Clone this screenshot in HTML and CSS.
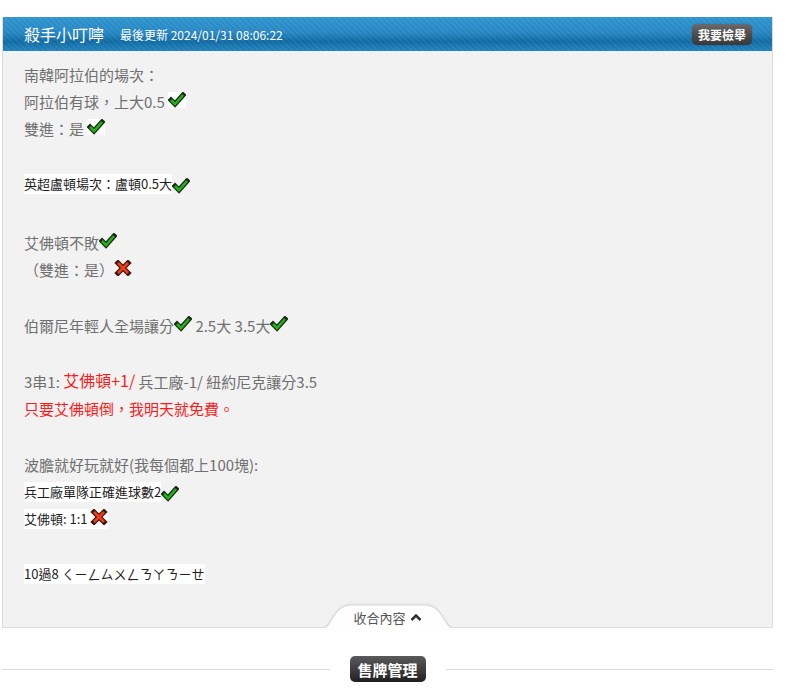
FILE: index.html
```html
<!DOCTYPE html>
<html lang="zh-Hant">
  <head>
    <meta charset="UTF-8" />
    <title>殺手小叮嚀</title>
    <link rel="stylesheet" href="styles.css">
  </head>
  <body>
    <div class="page">
      <div class="tip-box">
        <div class="tip-head">
          <h2>殺手小叮嚀</h2>
          <span class="updated">最後更新 2024/01/31 08:06:22</span>
          <button class="report-btn">我要檢舉</button>
        </div>

        <div class="tip-body">
          <div class="row">南韓阿拉伯的場次：</div>
          <div class="row">阿拉伯有球，上大0.5 <span class="mark"><svg viewBox="0 0 18 16"><rect width="18" height="16" fill="#fff"/><polyline points="3,8 7,12 15,3" class="ok-o"/><polyline points="3,8 7,12 15,3" class="ok"/></svg></span></div>
          <div class="row">雙進：是 <span class="mark"><svg viewBox="0 0 18 16"><rect width="18" height="16" fill="#fff"/><polyline points="3,8 7,12 15,3" class="ok-o"/><polyline points="3,8 7,12 15,3" class="ok"/></svg></span></div>

          <div class="row small gap1"><span class="hl">英超盧頓場次：盧頓0.5大</span><span class="mark low"><svg viewBox="0 0 18 16"><polyline points="3,8 7,12 15,3" class="ok-o"/><polyline points="3,8 7,12 15,3" class="ok"/></svg></span></div>

          <div class="row gap2">艾佛頓不敗<span class="mark"><svg viewBox="0 0 18 16"><polyline points="3,8 7,12 15,3" class="ok-o"/><polyline points="3,8 7,12 15,3" class="ok"/></svg></span></div>
          <div class="row">（雙進：是）<span class="mark"><svg viewBox="0 0 18 16"><path d="M4 3 L14 13 M14 3 L4 13" class="no-o"/><path d="M4 3 L14 13 M14 3 L4 13" class="no"/></svg></span></div>

          <div class="row gap3">伯爾尼年輕人全場讓分<span class="mark"><svg viewBox="0 0 18 16"><polyline points="3,8 7,12 15,3" class="ok-o"/><polyline points="3,8 7,12 15,3" class="ok"/></svg></span> 2.5大 3.5大<span class="mark"><svg viewBox="0 0 18 16"><polyline points="3,8 7,12 15,3" class="ok-o"/><polyline points="3,8 7,12 15,3" class="ok"/></svg></span></div>

          <div class="row gap3">3串1: <span class="red big">艾佛頓+1/</span>&nbsp;兵工廠-1/ 紐約尼克讓分3.5</div>
          <div class="row red">只要艾佛頓倒，我明天就免費。</div>

          <div class="row gap3">波膽就好玩就好(我每個都上100塊):</div>
          <div class="row small"><span class="hl">兵工廠單隊正確進球數2</span><span class="mark low"><svg viewBox="0 0 18 16"><polyline points="3,8 7,12 15,3" class="ok-o"/><polyline points="3,8 7,12 15,3" class="ok"/></svg></span></div>
          <div class="row small"><span class="hl">艾佛頓: 1:1 <span class="mark"><svg viewBox="0 0 18 16"><path d="M4 3 L14 13 M14 3 L4 13" class="no-o"/><path d="M4 3 L14 13 M14 3 L4 13" class="no"/></svg></span></span></div>

          <div class="row small gap4"><span class="hl">10過8 ㄑㄧㄥㄙㄨㄥㄋㄚㄋㄧㄝ</span></div>
        </div>

        <div class="fold-bar">
          <div class="fold-tab">
            <svg class="tab-shape" viewBox="0 0 130 23" preserveAspectRatio="none">
              <defs>
                <linearGradient id="tabfill" x1="0" y1="0" x2="0" y2="1">
                  <stop offset="0" stop-color="#fdfdfd"/>
                  <stop offset="1" stop-color="#ffffff"/>
                </linearGradient>
              </defs>
              <path d="M0 23 C9 23 10 1 28 1 L102 1 C120 1 121 23 130 23 Z" fill="url(#tabfill)"/>
              <path d="M0 23 C9 23 10 1 28 1 L102 1 C120 1 121 23 130 23" fill="none" stroke="#d8d8d8"/>
            </svg>
            <span class="fold-text">收合內容</span>
            <svg class="chev" viewBox="0 0 12 8"><polyline points="1.5,7 6,2.5 10.5,7" fill="none" stroke="#333" stroke-width="2.6"/></svg>
          </div>
        </div>
      </div>

      <div class="manage-row">
        <div class="rule"></div>
        <button class="manage-btn">售牌管理</button>
        <div class="rule"></div>
      </div>
    </div>
  </body>
</html>
```

FILE: styles.css
```css
* {
  margin: 0;
  padding: 0;
  box-sizing: border-box;
  font-family: "Noto Sans CJK TC", "Liberation Sans", sans-serif;
}

body {
  background: #fff;
}

.page {
  width: 771px;
  margin-left: 2px;
  padding-top: 17px;
}

.tip-box {
  border: 1px solid #dcdcdc;
  border-top: none;
  background: #f2f2f2;
}

.tip-head {
  height: 34px;
  display: flex;
  align-items: center;
  padding: 0 20px 0 21px;
  background-color: #1f7fb9;
  background-image:
    repeating-linear-gradient(45deg, rgba(255, 255, 255, 0.05) 0 2px, transparent 2px 4px),
    linear-gradient(180deg, #2f94cf 0%, #2686c2 45%, #0f6aa2 72%, #2283bf 100%);
}

.tip-head h2 {
  color: #fff;
  font-size: 16px;
  font-weight: 400;
  line-height: 1;
}

.updated {
  color: #fff;
  font-size: 12px;
  margin-left: 16px;
  margin-top: 1px;
}

.report-btn {
  margin-left: auto;
  height: 21px;
  padding: 0 6px;
  border: none;
  border-radius: 5px;
  color: #fff;
  font-size: 12px;
  font-weight: 700;
  background: linear-gradient(180deg, #6a6a6a 0%, #4d4d4d 50%, #393939 100%);
  box-shadow: 0 0 1px rgba(0, 0, 0, 0.5);
}

.tip-body {
  padding: 10px 20px 40px 21px;
  color: #707070;
  font-size: 15px;
}

.row {
  height: 27px;
  display: flex;
  align-items: center;
  white-space: pre;
}

.row.small {
  font-size: 13px;
  color: #1e1e1e;
}

.hl {
  background: #fff;
  display: inline-flex;
  align-items: center;
  line-height: 20px;
}

.gap1 { margin-top: 28px; }
.gap2 { margin-top: 32px; }
.gap3 { margin-top: 29px; }
.gap4 { margin-top: 28px; }

.red {
  color: #ff1a1a;
}

.big {
  font-size: 16px;
  margin-top: -4px;
}

.mark {
  display: inline-flex;
  width: 18px;
  height: 16px;
  margin-bottom: 4px;
}

.mark.low {
  margin-bottom: -4px;
}

.mark svg {
  width: 18px;
  height: 16px;
}

.ok-o {
  fill: none;
  stroke: #1b2a12;
  stroke-width: 5;
  stroke-linecap: square;
}

.ok {
  fill: none;
  stroke: #22b21c;
  stroke-width: 2.6;
}

.no-o {
  fill: none;
  stroke: #3a1a10;
  stroke-width: 5.2;
  stroke-linecap: square;
}

.no {
  fill: none;
  stroke: #ee3b1b;
  stroke-width: 2.8;
}

.fold-bar {
  display: flex;
  justify-content: center;
  height: 0;
}

.fold-tab {
  position: relative;
  width: 130px;
  height: 23px;
  margin-top: -23px;
  margin-bottom: -1px;
  display: flex;
  align-items: center;
  justify-content: center;
  gap: 4px;
  padding-top: 3px;
}

.tab-shape {
  position: absolute;
  left: 0;
  top: 0;
  width: 130px;
  height: 24px;
  filter: drop-shadow(0 -1px 1px rgba(0, 0, 0, 0.06));
}

.fold-text {
  position: relative;
  font-size: 13px;
  color: #555;
}

.chev {
  position: relative;
  width: 12px;
  height: 8px;
}

.manage-row {
  display: flex;
  align-items: center;
  margin-top: 28px;
}

.rule {
  flex: 1;
  height: 1px;
  background: #dcdcdc;
}

.manage-btn {
  height: 26px;
  width: 76px;
  margin: 0 20px;
  border: none;
  border-radius: 5px;
  color: #fff;
  font-size: 15px;
  font-weight: 700;
  background: linear-gradient(180deg, #5a5a5a 0%, #3c3c3c 55%, #1e1e1e 100%);
}
```
